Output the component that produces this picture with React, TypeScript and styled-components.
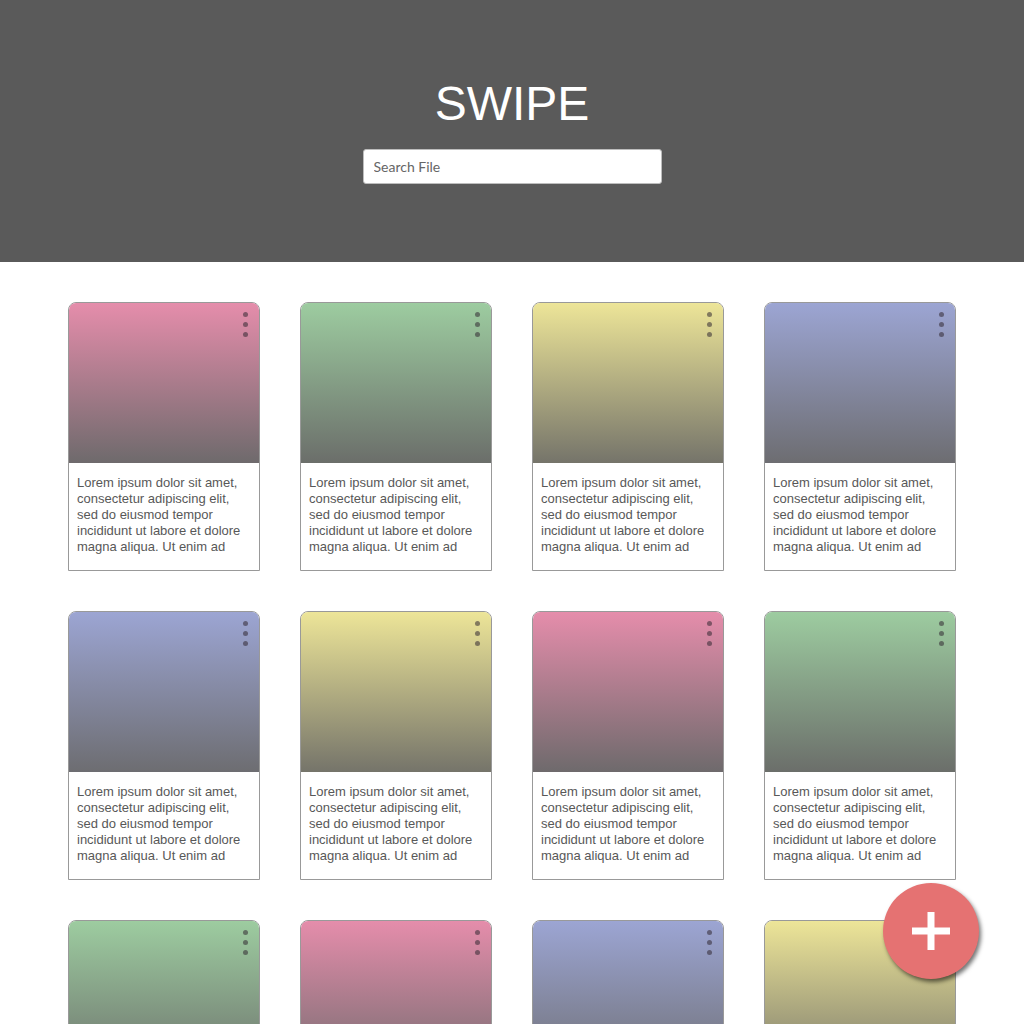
import React from 'react';
import styled, { createGlobalStyle } from 'styled-components';

type Tint = 'pink' | 'green' | 'yellow' | 'blue';

const tints: Record<Tint, [string, string]> = {
  pink: ['#e58dab', '#6e6a6c'],
  green: ['#9dcca0', '#6b6e6a'],
  yellow: ['#ede598', '#75746a'],
  blue: ['#9ca5d3', '#6d6d71'],
};

const rows: Tint[][] = [
  ['pink', 'green', 'yellow', 'blue'],
  ['blue', 'yellow', 'pink', 'green'],
  ['green', 'pink', 'blue', 'yellow'],
];

const lorem =
  'Lorem ipsum dolor sit amet, consectetur adipiscing elit, sed do eiusmod tempor incididunt ut labore et dolore magna aliqua. Ut enim ad';

const GlobalStyle = createGlobalStyle`
  html, body {
    margin: 0;
    padding: 0;
    background: #fff;
  }
  body::-webkit-scrollbar {
    display: none;
  }
  html {
    scrollbar-width: none;
  }
`;

const Page = styled.div`
  font-family: 'Liberation Sans', Arial, sans-serif;
`;

const Header = styled.header`
  height: 262px;
  box-sizing: border-box;
  padding-top: 80px;
  background: #5a5a5a;
  display: flex;
  flex-direction: column;
  align-items: center;
`;

const Title = styled.h1`
  margin: 0;
  font-size: 48px;
  line-height: 48px;
  font-weight: 400;
  color: #fff;
  font-family: 'Liberation Sans', Arial, sans-serif;
`;

const Search = styled.input`
  margin-top: 21px;
  width: 299px;
  height: 35px;
  box-sizing: border-box;
  padding: 0 10px 1px;
  border: 1px solid #bdbdbd;
  border-radius: 3px;
  background: #fff;
  font-family: Lato, 'Open Sans', sans-serif;
  font-size: 14px;
  color: #555;
  outline: none;
  &::placeholder {
    color: #666;
  }
`;

const Grid = styled.main`
  display: grid;
  grid-template-columns: repeat(4, 192px);
  column-gap: 40px;
  row-gap: 40px;
  padding: 40px 68px;
`;

const Card = styled.div`
  width: 192px;
  box-sizing: border-box;
  border: 1px solid #999;
  border-radius: 8px 8px 0 0;
  overflow: hidden;
  background: #fff;
`;

const Cover = styled.div<{ $tint: Tint }>`
  position: relative;
  height: 160px;
  background: linear-gradient(
    to bottom,
    ${({ $tint }) => tints[$tint][0]},
    ${({ $tint }) => tints[$tint][1]}
  );
`;

const Dots = styled.div`
  position: absolute;
  top: 9px;
  right: 11px;
  display: flex;
  flex-direction: column;
  gap: 5px;
`;

const Dot = styled.span`
  width: 5px;
  height: 5px;
  border-radius: 50%;
  background: rgba(50, 40, 50, 0.55);
`;

const Body = styled.p`
  margin: 0;
  height: 107px;
  box-sizing: border-box;
  padding: 12px 8px 0;
  font-size: 13px;
  line-height: 16px;
  color: #585858;
`;

const Fab = styled.button`
  position: fixed;
  right: 45px;
  bottom: 45px;
  width: 96px;
  height: 96px;
  border: none;
  border-radius: 50%;
  padding: 0;
  background: #e57272;
  box-shadow: 2px 3px 4px rgba(0, 0, 0, 0.55);
  display: flex;
  align-items: center;
  justify-content: center;
  cursor: pointer;
`;

const FileCard = ({ tint }: { tint: Tint }) => (
  <Card>
    <Cover $tint={tint}>
      <Dots>
        <Dot />
        <Dot />
        <Dot />
      </Dots>
    </Cover>
    <Body>{lorem}</Body>
  </Card>
);

export default function App() {
  return (
    <Page>
      <GlobalStyle />
      <Header>
        <Title>SWIPE</Title>
        <Search placeholder="Search File" />
      </Header>
      <Grid>
        {rows.flat().map((tint, i) => (
          <FileCard key={i} tint={tint} />
        ))}
      </Grid>
      <Fab aria-label="Add file">
        <svg width="38" height="38" viewBox="0 0 38 38">
          <rect x="0" y="15.5" width="38" height="7" fill="#fff" />
          <rect x="15.5" y="0" width="7" height="38" fill="#fff" />
        </svg>
      </Fab>
    </Page>
  );
}
